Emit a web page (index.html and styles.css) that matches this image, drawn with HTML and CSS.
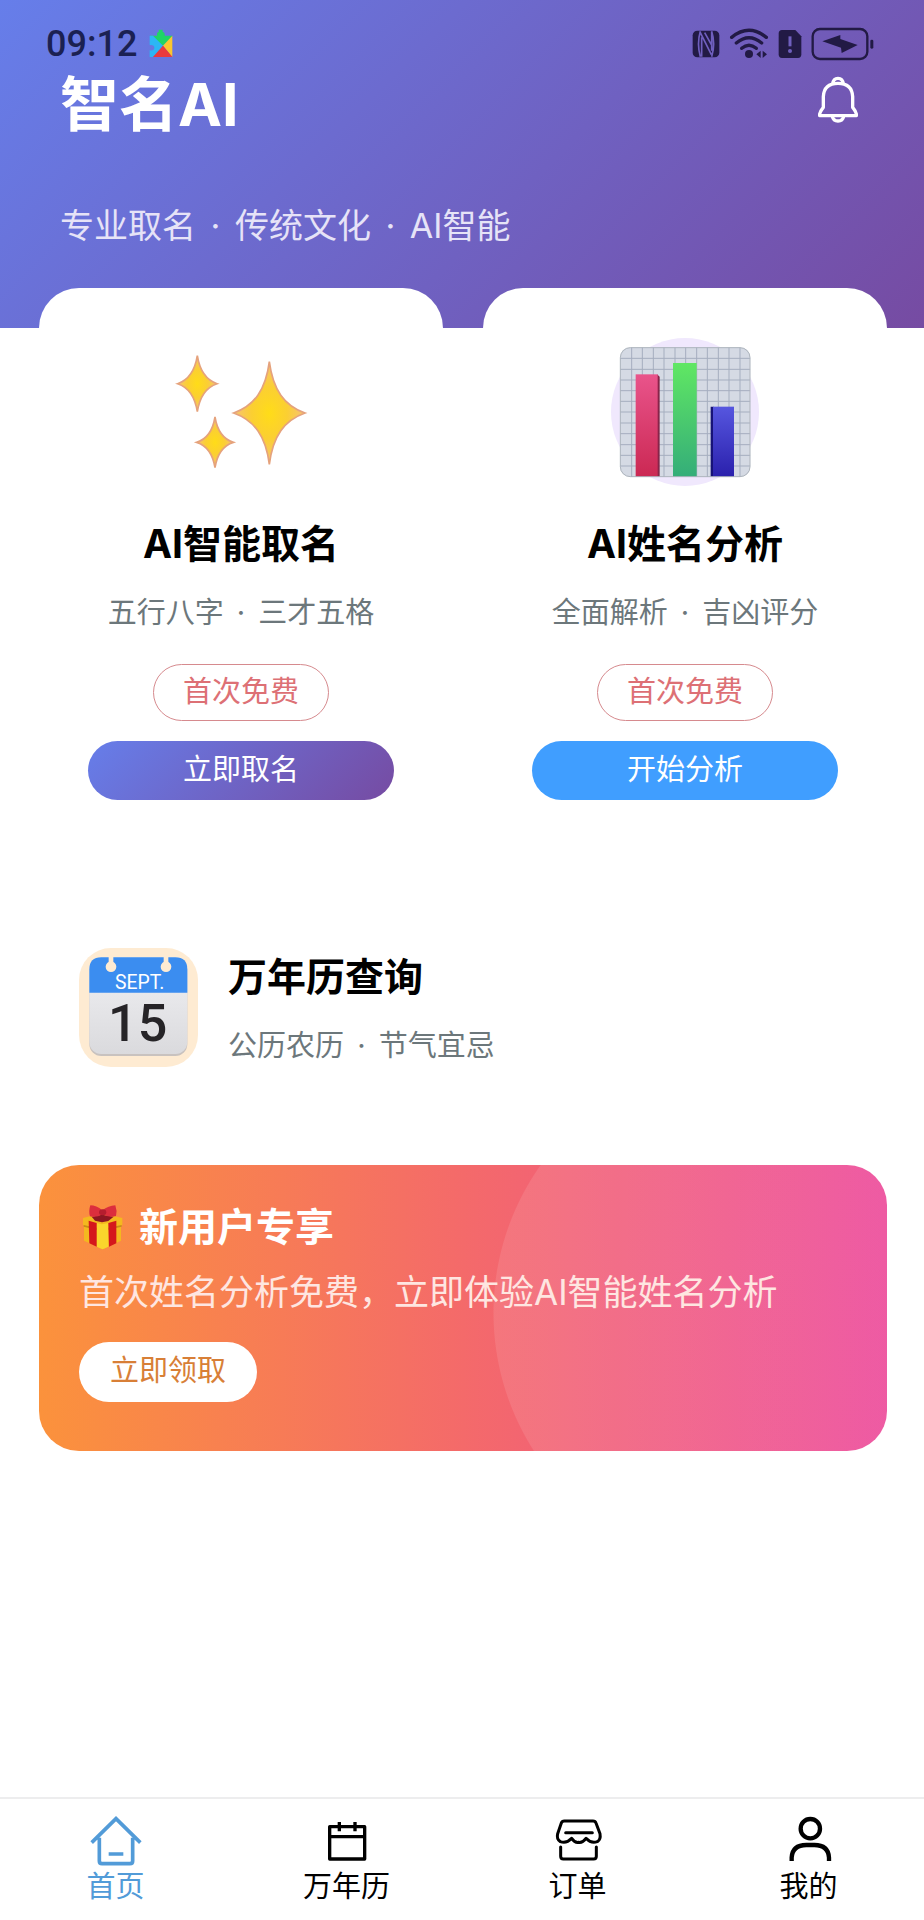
FILE: index.html
```html
<!DOCTYPE html>
<html lang="zh-CN">
<head>
<meta charset="utf-8">
<meta name="viewport" content="width=device-width, initial-scale=1">
<title>智名AI</title>
<link rel="stylesheet" href="styles.css">
</head>
<body>
<div class="app">
  <header class="header">
    <div class="status">
      <span class="status-time">09:12</span>
      <svg class="status-app" width="24" height="30" viewBox="0 0 72 90" aria-hidden="true">
        <path fill="#1fd565" d="M2 20H24V14Q24 9 29 9V2H41V9Q47 9 47 14V20H70V22L42 50Z"/>
        <path fill="#2cb6f5" d="M2 20H12L42 50L12 84H2V64Q16 66 16 56Q16 46 2 48Z"/>
        <path fill="#fbc62f" d="M70 20V84L42 50Z"/>
        <path fill="#ea3a3d" d="M42 50L70 84H12Z"/>
      </svg>
      <div class="status-icons">
        <svg width="28" height="28" viewBox="0 0 84 84" aria-hidden="true">
          <rect x="2" y="2" width="80" height="80" rx="14" fill="#221a45"/>
          <path d="M25 4Q14 42 25 80M29 22V80M25 8L58 74M38 8L58 44M59 4V62M59 4Q71 42 59 80" fill="none" stroke="#6f5fbe" stroke-width="5"/>
        </svg>
        <svg width="40" height="32" viewBox="0 0 120 96" aria-hidden="true">
          <g fill="none" stroke="#221a45" stroke-width="10" stroke-linecap="round">
            <path d="M8 28Q60-14 112 28"/><path d="M22 45Q60 14 98 45"/><path d="M38 61Q60 42 82 61"/>
          </g>
          <circle cx="60" cy="78" r="12" fill="#221a45"/>
          <path d="M95 68V90L82 79ZM101 68V90L114 79Z" fill="#221a45"/>
        </svg>
        <svg width="24" height="30" viewBox="0 0 72 90" aria-hidden="true">
          <path fill="#221a45" d="M12 3H52L70 22V76Q70 87 60 87H12Q2 87 2 76V14Q2 3 12 3Z"/>
          <path d="M36 22V52" stroke="#6f5fbe" stroke-width="9"/><circle cx="36" cy="66" r="6" fill="#6f5fbe"/>
        </svg>
        <svg width="64" height="34" viewBox="0 0 192 102" aria-hidden="true">
          <rect x="5" y="6" width="164" height="90" rx="22" fill="none" stroke="#221a45" stroke-width="7"/>
          <rect x="178" y="38" width="9" height="27" rx="4" fill="#221a45"/>
          <path d="M34 43L88 24V36L140 54L92 78L90 62Z" fill="#221a45"/>
        </svg>
      </div>
    </div>
    <div class="brand">
      <h1 class="brand-title">智名AI</h1>
      <button class="bell" type="button" aria-label="通知">
        <svg width="40" height="48" viewBox="0 0 120 144" fill="none" stroke="#fff" stroke-width="10" stroke-linejoin="round" aria-hidden="true">
          <path d="M5 119Q3 110 16 94V62Q18 22 60 22Q102 22 104 62V94Q117 110 115 119Z"/>
          <path d="M44 24Q46 7 60 7Q74 7 76 24M43 121Q46 135 60 135Q74 135 77 121"/>
        </svg>
      </button>
    </div>
    <p class="slogan">专业取名<span class="dot"> · </span>传统文化<span class="dot"> · </span>AI智能</p>
  </header>

  <main class="main">
    <section class="cards">
      <article class="card">
        <svg class="card-icon" viewBox="0 0 444 444" aria-hidden="true">
          <defs>
            <radialGradient id="gold"><stop offset="0" stop-color="#ffdc18"/><stop offset=".5" stop-color="#fbcf32"/><stop offset="1" stop-color="#f6c277"/></radialGradient>
          </defs>
          <g fill="url(#gold)" stroke="#e5a27c" stroke-width="5">
            <path d="M91 53Q102 121 150 137Q102 153 91 221Q80 153 32 137Q80 121 91 53Z"/>
            <path d="M144 237Q154 299 199 313Q154 327 144 389Q134 327 89 313Q134 299 144 237Z"/>
            <path d="M307 71C318 156 352 203 414 225C352 247 318 294 307 379C296 294 262 247 200 225C262 203 296 156 307 71Z"/>
          </g>
        </svg>
        <h2 class="title">AI智能取名</h2>
        <p class="note">五行八字<span class="dot"> · </span>三才五格</p>
        <span class="tag">首次免费</span>
        <button class="action action-violet" type="button">立即取名</button>
      </article>
      <article class="card">
        <svg class="card-icon" viewBox="0 0 444 444" aria-hidden="true">
          <defs>
            <linearGradient id="red" x2="0" y2="1"><stop stop-color="#e9548b"/><stop offset="1" stop-color="#cb2853"/></linearGradient>
            <linearGradient id="green" x2="0" y2="1"><stop stop-color="#60e763"/><stop offset="1" stop-color="#34ad79"/></linearGradient>
            <linearGradient id="blue" x2="0" y2="1"><stop stop-color="#5656df"/><stop offset="1" stop-color="#2a20ac"/></linearGradient>
            <clipPath id="panel"><rect x="27" y="28" width="391" height="389" rx="30"/></clipPath>
          </defs>
          <circle cx="222" cy="222" r="222" fill="#f0e8fd"/>
          <g clip-path="url(#panel)">
            <path fill="#d5dae4" d="M27 28H418V417H27Z"/>
            <path d="M62 28V417M94 28V417M127 28V417M159 28V417M192 28V417M224 28V417M257 28V417M289 28V417M322 28V417M354 28V417M387 28V417M27 61H418M27 94H418M27 126H418M27 158H418M27 190H418M27 222H418M27 255H418M27 287H418M27 320H418M27 352H418M27 384H418" stroke="#a5aebf" stroke-width="3"/>
            <path fill="#872449" d="M138 109L146 116V417H138Z"/><rect x="74" y="109" width="66" height="308" fill="url(#red)"/>
            <rect x="186" y="75" width="71" height="342" fill="url(#green)"/>
            <path fill="#171277" d="M299 206H308V417H299Z"/><rect x="306" y="206" width="63" height="211" fill="url(#blue)"/>
          </g>
          <rect x="28" y="29" width="389" height="387" rx="30" fill="none" stroke="#aeb5bd" stroke-width="3"/>
        </svg>
        <h2 class="title">AI姓名分析</h2>
        <p class="note">全面解析<span class="dot"> · </span>吉凶评分</p>
        <span class="tag">首次免费</span>
        <button class="action action-blue" type="button">开始分析</button>
      </article>
    </section>

    <section class="almanac">
      <svg class="almanac-icon" viewBox="0 0 357 357" aria-hidden="true">
        <defs><linearGradient id="paper" x2="0" y2="1"><stop stop-color="#f1f1f4"/><stop offset="1" stop-color="#dadadd"/></linearGradient></defs>
        <rect width="357" height="357" rx="96" fill="#feebd2"/>
        <rect x="31" y="32" width="294" height="292" rx="36" fill="#c8c2bf"/>
        <rect x="31" y="28" width="294" height="290" rx="36" fill="url(#paper)"/>
        <path fill="#3b8df0" d="M31 134V64Q31 28 67 28H289Q325 28 325 64V134Z"/>
        <g fill="#feebd2"><circle cx="96" cy="56" r="16"/><circle cx="261" cy="56" r="16"/><path d="M89 26H103V48H89ZM254 26H268V48H254Z"/></g>
        <text class="cal-month" x="182" y="122" text-anchor="middle">SEPT.</text>
        <text class="cal-day" x="176" y="278" text-anchor="middle">15</text>
      </svg>
      <div class="almanac-text">
        <h2 class="title">万年历查询</h2>
        <p class="note">公历农历<span class="dot"> · </span>节气宜忌</p>
      </div>
    </section>

    <section class="promo">
      <h2 class="promo-title">
        <svg width="46" height="46" viewBox="0 0 138 138" aria-hidden="true">
          <path fill="#f4b81f" d="M12 42L69 28L130 42V62L126 66V110L71 136L15 110V66L12 62Z"/>
          <path fill="#c98d16" d="M14 63L69 75L128 63V68L69 82L14 68Z"/>
          <path fill="#fad52c" d="M53 57L69 61L88 57V128L71 136L53 128Z"/>
          <path fill="#d5171c" d="M29 50L53 57V128L31 118ZM88 57L112 50V118L90 128Z"/>
          <path fill="#8e1622" d="M38 38L69 32L104 38L88 51L69 55L48 50Z"/>
          <path fill="#dc2e3d" d="M70 19Q52 4 34 4Q28 22 33 37Q52 42 70 31Q90 42 111 36Q115 20 109 4Q88 5 70 19Z"/>
          <ellipse cx="71" cy="25" rx="11" ry="9" fill="#b51d2e"/>
        </svg>
        新用户专享
      </h2>
      <p class="promo-text">首次姓名分析免费，立即体验AI智能姓名分析</p>
      <button class="promo-button" type="button">立即领取</button>
    </section>
  </main>

  <nav class="tabs">
    <a class="tab tab-active" href="#home">
      <svg width="52" height="52" viewBox="0 0 156 156" fill="none" stroke="currentColor" stroke-width="11" aria-hidden="true">
        <path d="M5 83L78 11L151 83M28 68V138Q28 146 36 146H120Q128 146 128 138V68M56 117H100"/>
      </svg>
      首页
    </a>
    <a class="tab" href="#calendar">
      <svg width="52" height="52" viewBox="0 0 156 156" fill="none" stroke="currentColor" stroke-width="10" stroke-linejoin="round" aria-hidden="true">
        <path d="M26 35H131V132H26ZM26 65H131M55 21V49M102 21V49"/>
      </svg>
      万年历
    </a>
    <a class="tab" href="#orders">
      <svg width="52" height="52" viewBox="0 0 156 156" fill="none" stroke="currentColor" stroke-width="9" stroke-linecap="round" stroke-linejoin="round" aria-hidden="true">
        <path d="M37 18H123Q130 18 132 24L144 56Q147 73 136 80Q118 87 102 70Q92 84 80 82Q68 84 59 70Q43 87 25 80Q13 73 17 56L28 24Q30 18 37 18ZM41 53H121M26 96V124Q26 132 34 132H125Q133 132 133 124V96"/>
      </svg>
      订单
    </a>
    <a class="tab" href="#me">
      <svg width="52" height="52" viewBox="0 0 156 156" fill="none" stroke="currentColor" stroke-width="13" aria-hidden="true">
        <circle cx="82" cy="41" r="29"/><path d="M26 138V128Q28 90 70 90H94Q136 90 138 128V138"/>
      </svg>
      我的
    </a>
  </nav>
</div>
</body>
</html>
```
FILE: styles.css
```css
* { box-sizing: border-box; }

body {
  margin: 0;
  background: #fff;
  color: #000;
  font-family: Inter, "Noto Sans CJK SC", sans-serif;
}

h1, h2, p { margin: 0; }
button { border: 0; font-family: inherit; cursor: pointer; }
svg { display: block; flex: none; }

.app {
  display: flex;
  flex-direction: column;
  min-height: 100vh;
}

.header {
  padding: 16px 60px 80px;
  background: linear-gradient(135deg, #667eea, #764ba2);
  color: #fff;
}

.status {
  display: flex;
  align-items: center;
  gap: 12px;
  height: 56px;
  margin: 0 -11px 0 -14px;
}

.status-time {
  color: #1b2152;
  font-family: Roboto, sans-serif;
  font-size: 36px;
  font-weight: 500;
  line-height: 40px;
}

.status-icons {
  display: flex;
  align-items: center;
  gap: 9px;
  margin-left: auto;
}

.brand {
  display: flex;
  align-items: center;
  justify-content: space-between;
  height: 64px;
}

.brand-title {
  padding-top: 2px;
  font-size: 59px;
  line-height: 68px;
  font-weight: 700;
}

.bell {
  padding: 0 6px 8px;
  background: none;
}

.slogan {
  margin-top: 69px;
  padding-bottom: 1px;
  font-size: 34px;
  line-height: 42px;
  color: #e6e3f7;
}

.dot { padding: 0 5px; }

.main { padding: 0 37px 40px 39px; }

.cards {
  display: grid;
  grid-template-columns: 1fr 1fr;
  gap: 40px;
  margin-top: -40px;
}

.card {
  display: flex;
  flex-direction: column;
  align-items: center;
  padding: 50px 49px;
  border-radius: 40px;
  background: #fff;
}

.card-icon {
  width: 148px;
  height: 148px;
  margin-bottom: 34px;
}

.title {
  font-size: 39px;
  line-height: 48px;
  font-weight: 700;
}

.note {
  margin-top: 25px;
  font-size: 29px;
  line-height: 40px;
  color: #6c777b;
}

.tag {
  margin: 31px 0 20px;
  padding: 0 29px 2px;
  border: 1px solid #d68a8e;
  border-radius: 29px;
  font-size: 29px;
  line-height: 53px;
  color: #dd7075;
}

.action {
  width: 100%;
  padding: 0 0 2px;
  border-radius: 30px;
  font-size: 29px;
  line-height: 57px;
  color: #fff;
}

.action-violet { background: linear-gradient(135deg, #667eea, #764ba2); }
.action-blue { background: #409eff; }

.almanac {
  display: flex;
  gap: 30px;
  margin-top: 58px;
  padding: 40px;
}

.almanac-icon {
  width: 119px;
  height: 119px;
}

.almanac-text { padding-top: 5px; }

.cal-month {
  fill: #fff;
  font-family: Roboto, sans-serif;
  font-size: 58px;
}

.cal-day {
  fill: #262427;
  font-family: Roboto, sans-serif;
  font-size: 156px;
  font-weight: 500;
}

.promo {
  margin-top: 58px;
  padding: 38px 40px 49px;
  border-radius: 40px;
  background:
    radial-gradient(circle at calc(100% - 138px) 148px, rgba(255, 255, 255, 0.1) 255px, transparent 256px),
    linear-gradient(90deg, #fb923c, #f46a6a 50%, #ec4899);
  color: #fff;
}

.promo-title {
  display: flex;
  align-items: center;
  gap: 14px;
  font-size: 39px;
  line-height: 48px;
  font-weight: 700;
}

.promo-text {
  margin-top: 20px;
  font-size: 35px;
  line-height: 42px;
  color: #fee6e1;
}

.promo-button {
  margin-top: 29px;
  padding: 0 31px 2px;
  border-radius: 30px;
  background: #fff;
  font-size: 29px;
  line-height: 58px;
  color: #d87f37;
}

.tabs {
  display: grid;
  grid-template-columns: repeat(4, 1fr);
  height: 123px;
  margin-top: auto;
  padding-top: 16px;
  border-top: 2px solid #ededee;
}

.tab {
  display: flex;
  flex-direction: column;
  align-items: center;
  font-size: 29px;
  line-height: 40px;
  color: #000;
  text-decoration: none;
}

.tab-active { color: #529bd8; }
```
